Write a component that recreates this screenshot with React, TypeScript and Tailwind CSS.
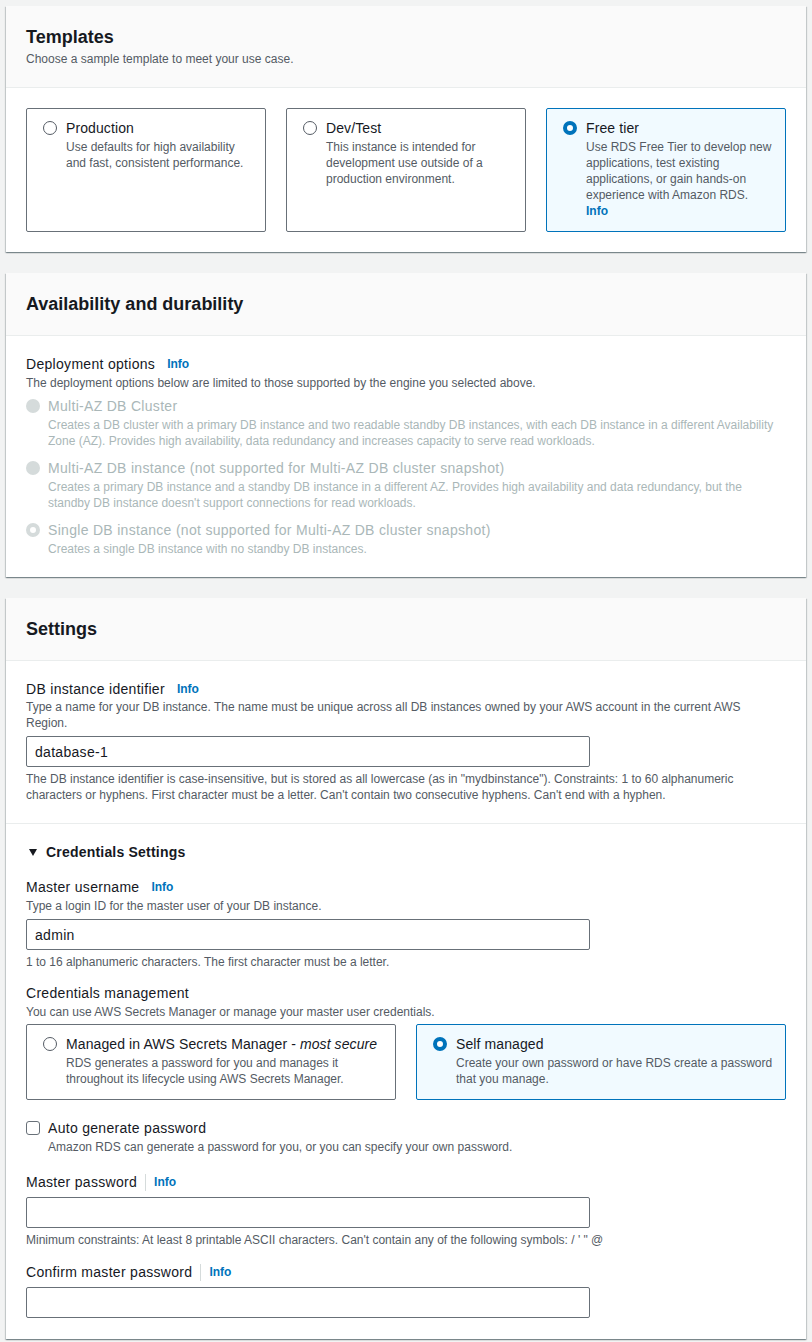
import type { ReactNode } from "react";

type RadioProps = { checked?: boolean; disabled?: boolean };

function Radio({ checked = false, disabled = false }: RadioProps) {
  if (disabled) {
    return checked ? (
      <span className="mt-[3px] box-border h-[14px] w-[14px] shrink-0 rounded-full border-4 border-[#d5dbdb] bg-white" />
    ) : (
      <span className="mt-[3px] h-[14px] w-[14px] shrink-0 rounded-full bg-[#d5dbdb]" />
    );
  }
  return checked ? (
    <span className="mt-[3px] box-border h-[14px] w-[14px] shrink-0 rounded-full border-4 border-[#0073bb] bg-white" />
  ) : (
    <span className="mt-[3px] box-border h-[14px] w-[14px] shrink-0 rounded-full border-[1.5px] border-[#545b64] bg-white" />
  );
}

function Info() {
  return <a className="text-[12px] font-bold leading-4 text-[#0073bb]">Info</a>;
}

function Container({ title, description, children }: { title: string; description?: string; children: ReactNode }) {
  return (
    <section className="bg-white shadow-[0_1px_1px_0_rgba(0,28,36,0.3),1px_1px_1px_0_rgba(0,28,36,0.15),-1px_1px_1px_0_rgba(0,28,36,0.15)]">
      <header className="border-b border-[#eaeded] bg-[#fafafa] px-5 py-5">
        <h2 className="text-[18px] font-bold leading-[22px] text-[#16191f]">{title}</h2>
        {description ? <p className="mt-[3px] text-[12px] leading-4 text-[#545b64]">{description}</p> : null}
      </header>
      {children}
    </section>
  );
}

type TileProps = { label: ReactNode; description: ReactNode; selected?: boolean; className?: string };

function Tile({ label, description, selected = false, className = "" }: TileProps) {
  return (
    <div
      className={`flex gap-[9px] rounded-[2px] border pb-3 pl-4 pr-3 pt-[9px] ${
        selected ? "border-[#0073bb] bg-[#f1faff]" : "border-[#687078] bg-white"
      } ${className}`}
    >
      <Radio checked={selected} />
      <div className="min-w-0">
        <p className="whitespace-nowrap text-[14px] leading-5 tracking-[0.1px] text-[#16191f]">{label}</p>
        <div className="mt-px text-[12px] leading-4 text-[#545b64]">{description}</div>
      </div>
    </div>
  );
}

function TextInput({ value = "" }: { value?: string }) {
  return (
    <input
      readOnly
      defaultValue={value}
      className="mt-[5px] block h-[31px] w-[564px] rounded-[2px] border border-[#687078] bg-white px-2 text-[14px] tracking-[0.3px] text-[#16191f] outline-none"
    />
  );
}

function Label({ children }: { children: ReactNode }) {
  return <span className="block text-[14px] leading-5 tracking-[0.3px] text-[#16191f]">{children}</span>;
}

const deploymentOptions = [
  {
    label: "Multi-AZ DB Cluster",
    description:
      "Creates a DB cluster with a primary DB instance and two readable standby DB instances, with each DB instance in a different Availability Zone (AZ). Provides high availability, data redundancy and increases capacity to serve read workloads.",
    checked: false,
  },
  {
    label: "Multi-AZ DB instance (not supported for Multi-AZ DB cluster snapshot)",
    description:
      "Creates a primary DB instance and a standby DB instance in a different AZ. Provides high availability and data redundancy, but the standby DB instance doesn't support connections for read workloads.",
    checked: false,
  },
  {
    label: "Single DB instance (not supported for Multi-AZ DB cluster snapshot)",
    description: "Creates a single DB instance with no standby DB instances.",
    checked: true,
  },
];

export default function App() {
  return (
    <div className="flex min-h-screen flex-col gap-[21px] bg-[#f2f3f3] px-[6px] pb-[3px] pt-[6px] font-['Liberation_Sans',Arial,sans-serif] text-[#16191f]">
      <Container title="Templates" description="Choose a sample template to meet your use case.">
        <div className="grid grid-cols-3 gap-5 px-5 pb-5 pt-5">
          <Tile className="h-[124px]" label="Production" description="Use defaults for high availability and fast, consistent performance." />
          <Tile
            className="h-[124px]"
            label="Dev/Test"
            description="This instance is intended for development use outside of a production environment."
          />
          <Tile
            className="h-[124px]"
            selected
            label="Free tier"
            description={
              <>
                <p>Use RDS Free Tier to develop new applications, test existing applications, or gain hands-on experience with Amazon RDS.</p>
                <p className="font-bold text-[#0073bb]">Info</p>
              </>
            }
          />
        </div>
      </Container>

      <Container title="Availability and durability">
        <div className="px-5 pb-5 pt-[18px]">
          <div className="flex items-center gap-3">
            <Label>Deployment options</Label>
            <Info />
          </div>
          <p className="mt-px text-[12px] leading-4 text-[#545b64]">
            The deployment options below are limited to those supported by the engine you selected above.
          </p>
          <div className="mt-[5px] flex flex-col gap-[9px]">
            {deploymentOptions.map((option) => (
              <div key={option.label} className="flex gap-2">
                <Radio disabled checked={option.checked} />
                <div>
                  <p className="text-[14px] leading-5 tracking-[0.3px] text-[#aab7b8]">{option.label}</p>
                  <p className="mt-px text-[12px] leading-4 text-[#aab7b8]">{option.description}</p>
                </div>
              </div>
            ))}
          </div>
        </div>
      </Container>

      <Container title="Settings">
        <div className="border-b border-[#eaeded] px-5 pb-5 pt-[18px]">
          <div className="flex items-center gap-3">
            <Label>DB instance identifier</Label>
            <Info />
          </div>
          <p className="max-w-[730px] text-[12px] leading-4 text-[#545b64]">
            Type a name for your DB instance. The name must be unique across all DB instances owned by your AWS account in the current AWS Region.
          </p>
          <TextInput value="database-1" />
          <p className="mt-1 max-w-[730px] text-[12px] leading-4 text-[#545b64]">
            The DB instance identifier is case-insensitive, but is stored as all lowercase (as in "mydbinstance"). Constraints: 1 to 60 alphanumeric characters or hyphens. First character must be a letter. Can't contain two consecutive hyphens. Can't end with a hyphen.
          </p>
        </div>

        <div className="px-5 pb-[21px] pt-[18px]">
          <div className="flex items-center gap-[9px]">
            <svg viewBox="0 0 8 7" className="ml-[3px] h-[7px] w-[8px] text-[#16191f]">
              <polygon points="0,0 8,0 4,7" fill="currentColor" />
            </svg>
            <span className="text-[14px] font-bold leading-5 tracking-[0.2px]">Credentials Settings</span>
          </div>

          <div className="mt-[15px] flex items-center gap-3">
            <Label>Master username</Label>
            <Info />
          </div>
          <p className="mt-px text-[12px] leading-4 text-[#545b64]">Type a login ID for the master user of your DB instance.</p>
          <TextInput value="admin" />
          <p className="mt-1 text-[12px] leading-4 text-[#545b64]">1 to 16 alphanumeric characters. The first character must be a letter.</p>

          <div className="mt-[13px]">
            <Label>Credentials management</Label>
          </div>
          <p className="mt-px text-[12px] leading-4 text-[#545b64]">
            You can use AWS Secrets Manager or manage your master user credentials.
          </p>
          <div className="mt-1 grid grid-cols-2 gap-5">
            <Tile
              label={
                <>
                  Managed in AWS Secrets Manager - <i>most secure</i>
                </>
              }
              description="RDS generates a password for you and manages it throughout its lifecycle using AWS Secrets Manager."
            />
            <Tile selected label="Self managed" description="Create your own password or have RDS create a password that you manage." />
          </div>

          <div className="mt-[18px] flex gap-2">
            <span className="mt-[3px] h-[14px] w-[14px] shrink-0 rounded-[3px] border border-[#687078] bg-white" />
            <div>
              <Label>Auto generate password</Label>
              <p className="mt-px text-[12px] leading-4 text-[#545b64]">
                Amazon RDS can generate a password for you, or you can specify your own password.
              </p>
            </div>
          </div>

          <div className="mt-[17px] flex items-center">
            <Label>Master password</Label>
            <span className="mx-2 h-[17px] w-px bg-[#d5dbdb]" />
            <Info />
          </div>
          <TextInput />
          <p className="mt-1 text-[12px] leading-4 text-[#545b64]">
            Minimum constraints: At least 8 printable ASCII characters. Can't contain any of the following symbols: / ' " @
          </p>

          <div className="mt-[14px] flex items-center">
            <Label>Confirm master password</Label>
            <span className="mx-2 h-[17px] w-px bg-[#d5dbdb]" />
            <Info />
          </div>
          <TextInput />
        </div>
      </Container>
    </div>
  );
}
